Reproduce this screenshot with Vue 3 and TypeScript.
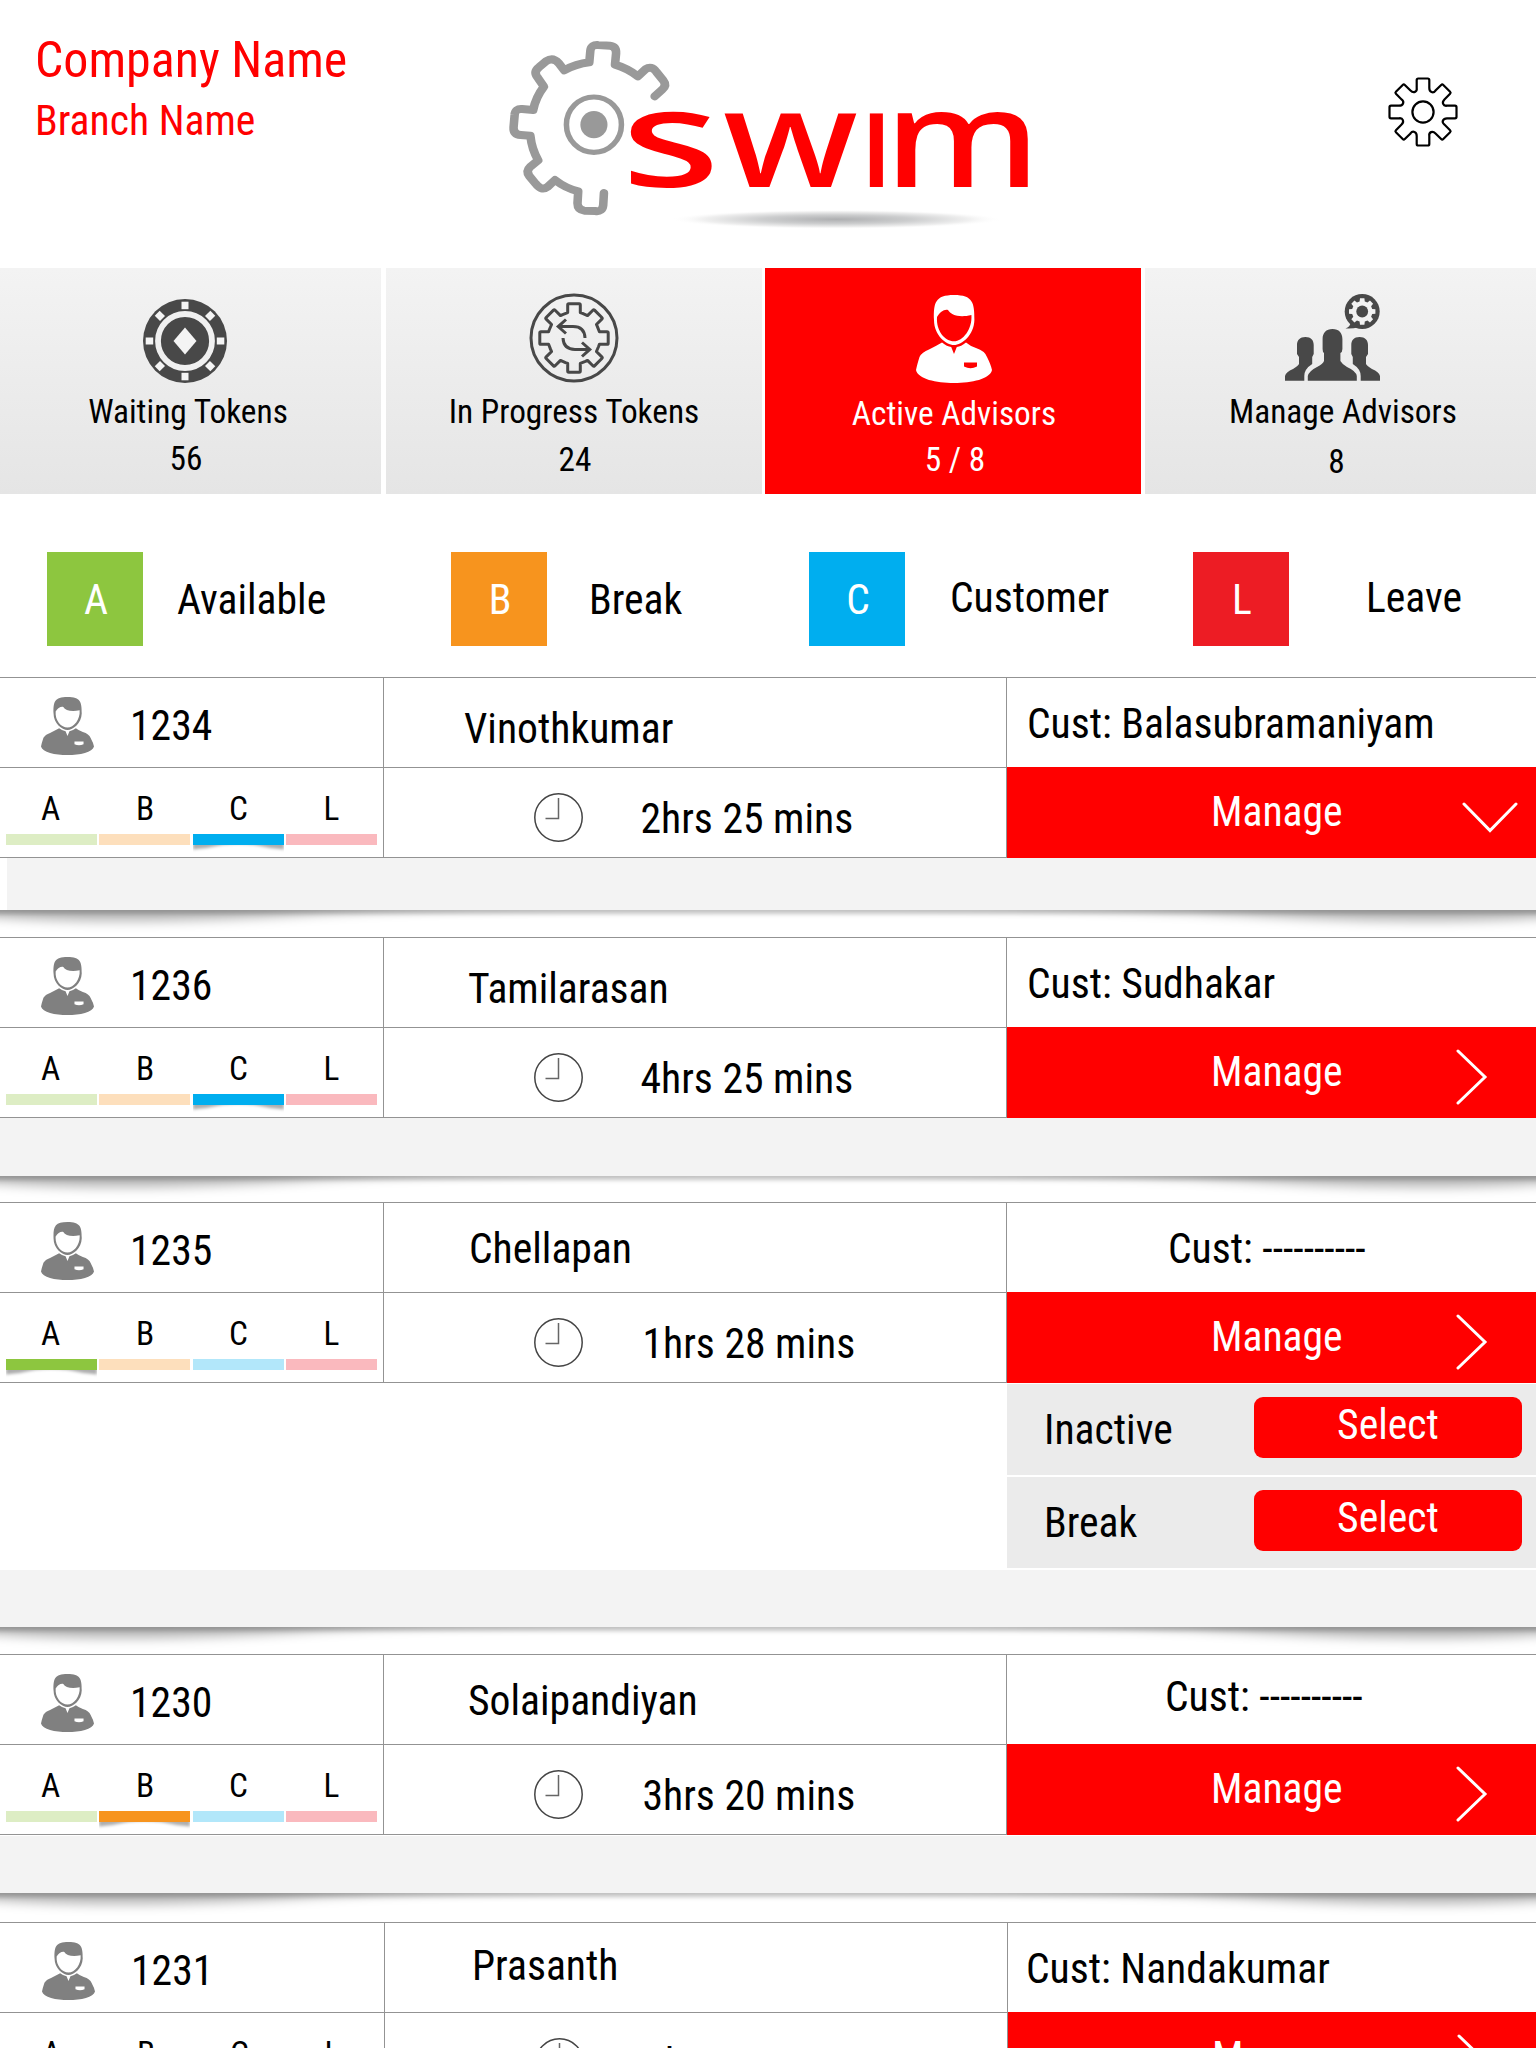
<script setup lang="ts">
interface Status { key: string; label: string; color: string; pale: string }
interface Tab { icon: string; label: string; count: string; active?: boolean; width: number; labelY: number; countY: number; shift: number; countShift: number }
interface Advisor {
  id: string; name: string; nameX: number; nameY: number
  status: string; time: string; timeX: number
  cust: string; custX: number; custY: number
  open?: boolean; actions?: string[]; gap: number; bandInset?: number; band: number; tail: number; nudge?: number
}

const statuses: Status[] = [
  { key: 'A', label: 'Available', color: '#8dc63f', pale: '#ddedc4' },
  { key: 'B', label: 'Break', color: '#f7941e', pale: '#fddfbc' },
  { key: 'C', label: 'Customer', color: '#00aeef', pale: '#b2e7fa' },
  { key: 'L', label: 'Leave', color: '#ed1c24', pale: '#fab9be' },
]

const tabs: Tab[] = [
  { icon: 'chip', label: 'Waiting Tokens', count: '56', width: 381, labelY: 0, countY: 0, shift: -2.5, countShift: -4.5 },
  { icon: 'progress', label: 'In Progress Tokens', count: '24', width: 376, labelY: 0, countY: 1, shift: 0, countShift: 1 },
  { icon: 'user', label: 'Active Advisors', count: '5 / 8', active: true, width: 376, labelY: 2, countY: 1, shift: 1, countShift: 2 },
  { icon: 'team', label: 'Manage Advisors', count: '8', width: 391, labelY: 0, countY: 3, shift: 2.5, countShift: -4 },
]

const advisors: Advisor[] = [
  { id: '1234', name: 'Vinothkumar', nameX: 80, nameY: 27, status: 'C', time: '2hrs 25 mins', timeX: 640.5, cust: 'Cust: Balasubramaniyam', custX: 20, custY: 22, open: true, gap: 0, bandInset: 7, band: 52, tail: 27 },
  { id: '1236', name: 'Tamilarasan', nameX: 84, nameY: 27, status: 'C', time: '4hrs 25 mins', timeX: 640.5, cust: 'Cust: Sudhakar', custX: 20, custY: 22, gap: 0, band: 58, tail: 26 },
  { id: '1235', name: 'Chellapan', nameX: 85, nameY: 22, status: 'A', time: '1hrs 28 mins', timeX: 642.5, cust: 'Cust: ----------', custX: 161, custY: 22, actions: ['Inactive', 'Break'], gap: 2, band: 57, tail: 27 },
  { id: '1230', name: 'Solaipandiyan', nameX: 84, nameY: 22, status: 'B', time: '3hrs 20 mins', timeX: 642.5, cust: 'Cust: ----------', custX: 158, custY: 18, gap: 1, band: 57, tail: 29 },
  { id: '1231', name: 'Prasanth', nameX: 87, nameY: 19, status: 'A', time: '1hrs 15 mins', timeX: 643.5, cust: 'Cust: Nandakumar', custX: 18, custY: 22, gap: 0, band: 57, tail: 27, nudge: 1 },
]

/** Repeats one tooth (and its joining valley) around the centre, eight times. */
function gear(tooth: number[][]): string {
  const out: string[] = []
  for (let i = 0; i < 8; i++) {
    const a = (i * Math.PI) / 4
    tooth.forEach((p) => {
      const pts: string[] = []
      for (let k = 0; k < p.length; k += 2) {
        const x = p[k] * Math.cos(a) - p[k + 1] * Math.sin(a)
        const y = p[k] * Math.sin(a) + p[k + 1] * Math.cos(a)
        pts.push(`${x.toFixed(2)} ${y.toFixed(2)}`)
      }
      const cmd = out.length === 0 ? 'M' : p.length === 2 ? 'L' : p.length === 4 ? 'Q' : 'C'
      out.push(cmd + pts.join(' '))
    })
  }
  return out.join('') + 'Z'
}

const settingsGear = gear([[-6.3, -24], [-6.3, -32], [-6.3, -33.5, -4.8, -33.5], [4.8, -33.5], [6.3, -33.5, 6.3, -32], [6.3, -24], [6.3, -19.8, 10.2, -18.2, 12.52, -21.42]])
const progressGear = gear([[-6.3, -25.4], [-6.3, -33], [-6.3, -34.2, -5.2, -34.2], [5.2, -34.2], [6.3, -34.2, 6.3, -33], [6.3, -25.4], [8.5, -24.6]])
const bubbleGear = gear([[-2.6, -10], [-2.2, -13.2], [2.2, -13.2], [2.6, -10]])

const faceHole = 'M21 22C24 17 28 14 32 15C35 20 43 23 55.4 20C56.5 34 47 46.3 38 46.3C29 46.3 20 36 21 22Z'
const userPath =
  'M18 25C17.5 8 19 0 38 0C57 0 58.5 8 58.4 25C58 40 46 50 38 50C30 50 18 40 18 25Z' + faceHole +
  'M26 47.5Q31 51.5 35.2 52L38 59L40.8 52Q45 51.5 50 47.5Q54 51 60 53Q69 56 71 62Q75 70 76 75C74 84 56 88 38 88C20 88 2 84 0 75Q1 70 3.5 62Q6 57 13 54.5Q20 51 26 47.5ZM48 67.5H61V71.5Q54.5 75 48 71.5Z'
const sidePerson = 'M20.4 43C26 43 28.7 46 28.7 51V60L27.2 63V70Q19.3 75 19.3 82V86.7H0V82Q1 78 8 75Q13 72 14 70V63L12 60V51C12 46 15 43 20.4 43Z'
</script>

<template>
  <main class="page">
    <header class="header">
      <div class="company">
        <div class="company-name">Company Name</div>
        <div class="branch-name">Branch Name</div>
      </div>
      <svg class="logo" viewBox="0 0 1568 690" preserveAspectRatio="none">
        <defs>
          <radialGradient id="logoShadow">
            <stop offset="0" stop-color="#aeafb1" />
            <stop offset=".45" stop-color="#cccdce" />
            <stop offset=".8" stop-color="#f0f0f0" />
            <stop offset="1" stop-color="#fff" stop-opacity="0" />
          </radialGradient>
          <clipPath id="noDot"><rect x="1040" y="280" width="90" height="240" /></clipPath>
        </defs>
        <ellipse cx="970" cy="598" rx="465" ry="29" fill="url(#logoShadow)" />
        <g fill="none" stroke="#999" stroke-width="24" stroke-linecap="round" stroke-linejoin="round">
          <path d="M461 229L482 209Q496 196 485 181L466 156Q453 135 435 148L414 169Q385 145 350 134L353 100Q354 79 336 77L303 75Q283 73 281 92L278 127Q240 132 208 151L193 130Q176 110 157 124L137 142Q120 156 135 175L151 200Q128 232 121 270L90 267Q70 265 69 285L66 322Q65 343 86 345L113 347Q117 388 135 421L112 441Q100 453 110 468L127 490Q144 515 162 500L182 480Q212 505 247 514L245 550Q245 570 265 572L295 573Q315 576 317 555L319 519" />
          <ellipse cx="291" cy="314" rx="77" ry="83" stroke-width="15.500" />
        </g>
        <ellipse cx="291" cy="314" rx="38" ry="41" fill="#999" />
        <g class="wordmark">
          <text x="366" y="500" textLength="280" lengthAdjust="spacingAndGlyphs">s</text>
          <text x="652" y="500" textLength="379" lengthAdjust="spacingAndGlyphs">w</text>
          <text x="1035" y="500" textLength="93" lengthAdjust="spacingAndGlyphs" clip-path="url(#noDot)">i</text>
          <text x="1104" y="500" textLength="438" lengthAdjust="spacingAndGlyphs">m</text>
        </g>
      </svg>
      <svg class="settings" viewBox="-36 -36 72 72">
        <g fill="none" stroke="#000" stroke-width="2.200">
          <path :d="settingsGear" />
          <circle r="10.600" />
        </g>
      </svg>
    </header>

    <nav class="tabs">
      <div v-for="t in tabs" :key="t.label" class="tab" :class="[t.icon, { active: t.active }]" :style="{ width: t.width + 'px' }">
        <svg v-if="t.icon === 'chip'" width="84" height="84" viewBox="-42 -42 84 84">
          <circle r="42" fill="#484848" />
          <circle r="27" fill="none" stroke="#f0f0f0" stroke-width="5.800" />
          <rect v-for="n in 8" :key="n" x="-3.500" y="-39.300" width="7" height="7.500" fill="#f4f4f4" :transform="`rotate(${n * 45})`" />
          <path d="M0-13.400L11.500 0L0 13.400L-11.500 0Z" fill="#f4f4f4" />
        </svg>
        <svg v-else-if="t.icon === 'progress'" width="90" height="90" viewBox="-45 -45 90 90">
          <g fill="none" stroke="#484848" stroke-width="3">
            <circle r="43" />
            <path :d="progressGear" stroke-width="3" stroke-linejoin="round" />
            <path d="M11 0Q10.500-11.400-1-11.400H-16M-8-18.500L-15.800-11.400L-8-4.500" />
            <path d="M-11 0Q-10.500 11.400 1 11.400H16M8 18.500L15.800 11.400L8 4.500" />
          </g>
        </svg>
        <svg v-else-if="t.icon === 'user'" width="76" height="88" viewBox="0 0 76 88">
          <path :d="userPath" fill="#fff" fill-rule="evenodd" />
        </svg>
        <svg v-else width="95" height="87" viewBox="0 0 95 87">
          <g fill="#484848">
            <path :d="sidePerson" />
            <path :d="sidePerson" transform="translate(95 0) scale(-1 1)" />
            <path d="M47.500 35C54 35 57.400 39 57.400 45V55Q57.400 58 55.400 59V67Q57 70 62 73Q71 77 71.800 82V86.700H22.800V82Q24 77 32 73Q38 70 39 67V59Q37.600 58 37.600 55V45C37.600 39 41 35 47.500 35Z" />
            <circle cx="77.200" cy="17.500" r="17.500" />
            <path d="M66 28Q65 33 60.500 34.500Q68 35 74 33Z" />
            <g transform="translate(77.200 17.500)">
              <path :d="bubbleGear" fill="#f2f2f2" />
              <circle r="5.900" />
            </g>
          </g>
        </svg>
        <div class="tab-label" :style="{ marginTop: t.labelY + 'px', marginLeft: t.shift * 2 + 'px' }">{{ t.label }}</div>
        <div class="tab-count" :style="{ marginTop: t.countY - t.labelY + 'px', marginLeft: t.countShift * 2 + 'px' }">{{ t.count }}</div>
      </div>
    </nav>

    <section class="legend">
      <div v-for="s in statuses" :key="s.key" class="legend-item" :class="'item-' + s.key">
        <span class="swatch" :style="{ background: s.color }">{{ s.key }}</span>
        <span class="legend-label">{{ s.label }}</span>
      </div>
    </section>

    <article v-for="a in advisors" :key="a.id" class="advisor">
      <div class="line upper">
        <div class="cell first" :style="{ width: 384 + (a.nudge || 0) + 'px', paddingLeft: 41 + (a.nudge || 0) + 'px' }">
          <svg class="avatar" width="53" height="58" viewBox="0 0 76 88" preserveAspectRatio="none">
            <path :d="userPath" fill="#808080" fill-rule="evenodd" />
          </svg>
          <span class="txt number">{{ a.id }}</span>
        </div>
        <div class="cell second" :style="{ paddingLeft: a.nameX + 'px' }">
          <span class="txt" :style="{ marginTop: a.nameY + 'px' }">{{ a.name }}</span>
        </div>
        <div class="cell third" :style="{ paddingLeft: a.custX + 'px' }">
          <span class="txt" :style="{ marginTop: a.custY + 'px' }">{{ a.cust }}</span>
        </div>
      </div>
      <div class="line lower">
        <div class="cell first states" :style="{ width: 384 + (a.nudge || 0) + 'px', paddingLeft: 6 + (a.nudge || 0) + 'px' }">
          <div v-for="s in statuses" :key="s.key" class="state" :class="'state-' + s.key">
            <span class="state-key">{{ s.key }}</span>
            <span class="state-bar" :style="{ background: s.key === a.status ? s.color : s.pale }"></span>
            <svg v-if="s.key === a.status" class="state-shadow" width="91" height="9" viewBox="0 0 91 9">
              <path d="M0-6H91V4.500Q78 3.500 62 0Q45-2 29 0Q13 3.500 0 4.500Z" />
            </svg>
          </div>
        </div>
        <div class="cell second">
          <svg class="clock" width="49" height="49" viewBox="0 0 49 49">
            <g fill="none" stroke="#444" stroke-width="1.500">
              <circle cx="24.500" cy="24.500" r="23.700" />
              <path d="M24.500 5V25.500H11.500" stroke="#666" />
            </g>
          </svg>
          <span class="txt time" :style="{ marginLeft: a.timeX - 583 + 'px' }">{{ a.time }}</span>
        </div>
        <div class="cell third manage">
          <span class="txt">Manage</span>
          <svg v-if="a.open" class="down" width="56" height="32" viewBox="0 0 56 32"><path d="M2 2L28 28.500L54 2" /></svg>
          <svg v-else class="right" width="32" height="56" viewBox="0 0 32 56"><path d="M2 2L29 28L2 54" /></svg>
        </div>
      </div>
      <div v-if="a.actions" class="actions">
        <div v-for="act in a.actions" :key="act" class="action">
          <span class="txt">{{ act }}</span>
          <button class="select">Select</button>
        </div>
      </div>
      <div class="band" :style="{ height: a.band + 'px', marginTop: a.gap + 'px', marginLeft: (a.bandInset || 0) + 'px' }"></div>
      <svg class="shadow" width="1536" :height="a.tail" :viewBox="`0 0 1536 ${a.tail}`">
        <path class="deep" d="M-40-20H1576V5Q1440 18 1240 5Q1080-5 768-5Q440-5 300 5Q110 18-40 5Z" />
        <path class="thin" d="M-20-6H1556V4H-20Z" />
      </svg>
    </article>
  </main>
</template>

<style>
body {
  margin: 0;
  background: #fff;
}
</style>

<style scoped>
.page {
  width: 1536px;
  height: 2048px;
  overflow: hidden;
  background: #fff;
  color: #000;
  font-family: "Roboto Condensed", Roboto, "Liberation Sans", sans-serif;
  font-stretch: 75%;
  font-size: 41.67px;
}
.header {
  display: flex;
  height: 268px;
  color: #f00;
}
.company {
  width: 455px;
  padding: 31px 0 0 35px;
  white-space: nowrap;
}
.company-name { font-size: 50px; line-height: 58px; }
.branch-name { font-size: 41.67px; line-height: 48px; margin-top: 8px; }
.logo { width: 560px; height: 230px; margin-top: 20px; flex: none; }
.wordmark {
  fill: #f00;
  font-family: "Noto Sans", sans-serif;
  font-stretch: 100%;
  font-weight: 500;
  font-size: 410px;
}
.settings { width: 72px; height: 72px; margin: 76px 0 0 336.5px; }

.tabs { display: flex; height: 226px; }
.tab {
  display: flex;
  flex-direction: column;
  align-items: center;
  flex: none;
  background: linear-gradient(#f3f3f3, #e5e5e5);
  font-size: 33.33px;
  line-height: 40px;
  white-space: nowrap;
}
.tab.active { background: #f00; color: #fff; }
.tab.progress { margin-left: 5px; }
.tab.user { margin-left: 3px; }
.tab.team { margin-left: 4px; }
.tab svg { flex: none; }
.chip svg { margin: 31px 0 9px -11px; }
.progress svg { margin: 25px 0 9px 0; }
.user svg { margin: 27px 0 9px 2px; }
.team svg { margin: 26px 0 11px -16px; }
.tab-count { padding-top: 7px; }

.legend { display: flex; height: 125px; padding: 58px 0 0 47px; }
.legend-item { display: flex; white-space: nowrap; line-height: 48px; }
.item-A { width: 404px; }
.item-B { width: 358px; }
.item-C { width: 384px; }
.swatch {
  box-sizing: border-box;
  width: 96px;
  height: 94px;
  padding: 24px 0 0 2px;
  color: #fff;
  text-align: center;
}
.legend-label { margin: 24px 0 0 34px; }
.item-B .legend-label { margin-left: 42px; }
.item-C .legend-label { margin: 22px 0 0 45px; }
.item-L .legend-label { margin: 22px 0 0 77px; }

.line { display: flex; }
.cell {
  box-sizing: border-box;
  display: flex;
  align-items: flex-start;
  border-top: 1px solid #939393;
  flex: none;
}
.upper .cell { height: 90px; }
.lower .cell { height: 91px; border-bottom: 1px solid #939393; }
.first, .second { border-right: 1px solid #939393; }
.second { width: 623px; }
.third { flex: 1 1 0; min-width: 0; }
.txt { line-height: 48px; white-space: nowrap; }
.avatar { margin-top: 19px; flex: none; }
.number { margin: 24px 0 0 36px; }
.state { width: 91px; margin-right: 2px; text-align: center; }
.state-B { margin-right: 3px; }
.state-key { display: block; box-sizing: border-box; font-size: 33.33px; line-height: 40px; padding-top: 21px; height: 66px; }
.state-A .state-key { padding-right: 2px; }
.state-B .state-key { padding-left: 1px; }
.state-bar { display: block; height: 11px; }
.state-shadow { display: block; }
.state-shadow path { fill: rgba(0, 0, 0, .32); filter: blur(1.6px); }
.clock { margin: 25px 0 0 150px; flex: none; }
.time { margin-top: 27px; }
.lower .manage {
  border: 0;
  background: #f00;
  color: #fff;
  padding-left: 204px;
}
.manage .txt { width: 130px; margin-top: 21px; }
.manage path { fill: none; stroke: #fff; stroke-width: 3; stroke-linecap: round; }
.down { margin: 35px 0 0 121px; }
.right { margin: 22px 0 0 115px; }
.actions {
  display: flex;
  flex-direction: column;
  gap: 2px;
  width: 529px;
  margin: 1px 0 0 auto;
}
.action {
  display: flex;
  align-items: flex-start;
  justify-content: space-between;
  box-sizing: border-box;
  height: 91px;
  padding: 13px 14px 0 37px;
  background: #ebebeb;
}
.action .txt { margin-top: 9px; }
.select {
  width: 268px;
  height: 61px;
  border: 0;
  border-radius: 9px;
  background: #f00;
  color: #fff;
  font: inherit;
  font-stretch: 75%;
  line-height: 48px;
  padding: 0 0 6px;
}
.band { background: #f3f3f3; }
.shadow { display: block; overflow: hidden; }
.deep { fill: rgba(0, 0, 0, .28); filter: blur(5.5px); }
.thin { fill: rgba(0, 0, 0, .2); filter: blur(2px); }
</style>
